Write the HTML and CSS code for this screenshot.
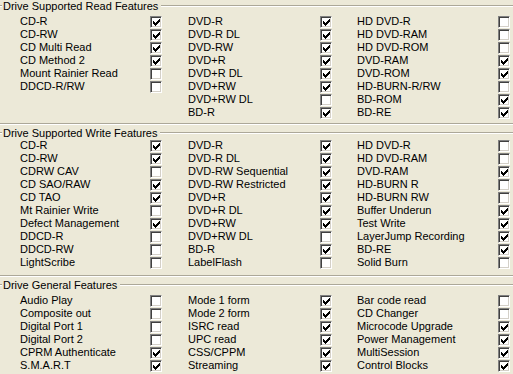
FILE: index.html
```html
<!DOCTYPE html>
<html lang="en">
<head>
  <meta charset="UTF-8" />
  <title>Drive Features</title>
  <link rel="stylesheet" href="styles.css">
</head>
<body>

  <!-- Read features -->
  <div class="group read">
    <div class="legend"><span>Drive Supported Read Features</span></div>
    <div class="cols">
      <div class="col c1">
        <div class="row"><span>CD-R</span><i class="cb on"></i></div>
        <div class="row"><span>CD-RW</span><i class="cb on"></i></div>
        <div class="row"><span>CD Multi Read</span><i class="cb on"></i></div>
        <div class="row"><span>CD Method 2</span><i class="cb on"></i></div>
        <div class="row"><span>Mount Rainier Read</span><i class="cb"></i></div>
        <div class="row"><span>DDCD-R/RW</span><i class="cb"></i></div>
      </div>
      <div class="col c2">
        <div class="row"><span>DVD-R</span><i class="cb on"></i></div>
        <div class="row"><span>DVD-R DL</span><i class="cb on"></i></div>
        <div class="row"><span>DVD-RW</span><i class="cb on"></i></div>
        <div class="row"><span>DVD+R</span><i class="cb on"></i></div>
        <div class="row"><span>DVD+R DL</span><i class="cb on"></i></div>
        <div class="row"><span>DVD+RW</span><i class="cb on"></i></div>
        <div class="row"><span>DVD+RW DL</span><i class="cb"></i></div>
        <div class="row"><span>BD-R</span><i class="cb on"></i></div>
      </div>
      <div class="col c3">
        <div class="row"><span>HD DVD-R</span><i class="cb"></i></div>
        <div class="row"><span>HD DVD-RAM</span><i class="cb"></i></div>
        <div class="row"><span>HD DVD-ROM</span><i class="cb"></i></div>
        <div class="row"><span>DVD-RAM</span><i class="cb on"></i></div>
        <div class="row"><span>DVD-ROM</span><i class="cb on"></i></div>
        <div class="row"><span>HD-BURN-R/RW</span><i class="cb"></i></div>
        <div class="row"><span>BD-ROM</span><i class="cb on"></i></div>
        <div class="row"><span>BD-RE</span><i class="cb on"></i></div>
      </div>
    </div>
    <div class="group-end"></div>
  </div>

  <!-- Write features -->
  <div class="group write">
    <div class="legend"><span>Drive Supported Write Features</span></div>
    <div class="cols">
      <div class="col c1">
        <div class="row"><span>CD-R</span><i class="cb on"></i></div>
        <div class="row"><span>CD-RW</span><i class="cb on"></i></div>
        <div class="row"><span>CDRW CAV</span><i class="cb"></i></div>
        <div class="row"><span>CD SAO/RAW</span><i class="cb on"></i></div>
        <div class="row"><span>CD TAO</span><i class="cb on"></i></div>
        <div class="row"><span>Mt Rainier Write</span><i class="cb"></i></div>
        <div class="row"><span>Defect Management</span><i class="cb on"></i></div>
        <div class="row"><span>DDCD-R</span><i class="cb"></i></div>
        <div class="row"><span>DDCD-RW</span><i class="cb"></i></div>
        <div class="row"><span>LightScribe</span><i class="cb"></i></div>
      </div>
      <div class="col c2">
        <div class="row"><span>DVD-R</span><i class="cb on"></i></div>
        <div class="row"><span>DVD-R DL</span><i class="cb on"></i></div>
        <div class="row"><span>DVD-RW Sequential</span><i class="cb on"></i></div>
        <div class="row"><span>DVD-RW Restricted</span><i class="cb on"></i></div>
        <div class="row"><span>DVD+R</span><i class="cb on"></i></div>
        <div class="row"><span>DVD+R DL</span><i class="cb on"></i></div>
        <div class="row"><span>DVD+RW</span><i class="cb on"></i></div>
        <div class="row"><span>DVD+RW DL</span><i class="cb"></i></div>
        <div class="row"><span>BD-R</span><i class="cb on"></i></div>
        <div class="row"><span>LabelFlash</span><i class="cb"></i></div>
      </div>
      <div class="col c3">
        <div class="row"><span>HD DVD-R</span><i class="cb"></i></div>
        <div class="row"><span>HD DVD-RAM</span><i class="cb"></i></div>
        <div class="row"><span>DVD-RAM</span><i class="cb on"></i></div>
        <div class="row"><span>HD-BURN R</span><i class="cb"></i></div>
        <div class="row"><span>HD-BURN RW</span><i class="cb"></i></div>
        <div class="row"><span>Buffer Underun</span><i class="cb on"></i></div>
        <div class="row"><span>Test Write</span><i class="cb on"></i></div>
        <div class="row"><span>LayerJump Recording</span><i class="cb on"></i></div>
        <div class="row"><span>BD-RE</span><i class="cb on"></i></div>
        <div class="row"><span>Solid Burn</span><i class="cb"></i></div>
      </div>
    </div>
    <div class="group-end"></div>
  </div>

  <!-- General features -->
  <div class="group general">
    <div class="legend"><span>Drive General Features</span></div>
    <div class="cols">
      <div class="col c1">
        <div class="row"><span>Audio Play</span><i class="cb"></i></div>
        <div class="row"><span>Composite out</span><i class="cb"></i></div>
        <div class="row"><span>Digital Port 1</span><i class="cb"></i></div>
        <div class="row"><span>Digital Port 2</span><i class="cb"></i></div>
        <div class="row"><span>CPRM Authenticate</span><i class="cb on"></i></div>
        <div class="row"><span>S.M.A.R.T</span><i class="cb on"></i></div>
      </div>
      <div class="col c2">
        <div class="row"><span>Mode 1 form</span><i class="cb on"></i></div>
        <div class="row"><span>Mode 2 form</span><i class="cb on"></i></div>
        <div class="row"><span>ISRC read</span><i class="cb on"></i></div>
        <div class="row"><span>UPC read</span><i class="cb on"></i></div>
        <div class="row"><span>CSS/CPPM</span><i class="cb on"></i></div>
        <div class="row"><span>Streaming</span><i class="cb on"></i></div>
      </div>
      <div class="col c3">
        <div class="row"><span>Bar code read</span><i class="cb"></i></div>
        <div class="row"><span>CD Changer</span><i class="cb"></i></div>
        <div class="row"><span>Microcode Upgrade</span><i class="cb on"></i></div>
        <div class="row"><span>Power Management</span><i class="cb on"></i></div>
        <div class="row"><span>MultiSession</span><i class="cb on"></i></div>
        <div class="row"><span>Control Blocks</span><i class="cb on"></i></div>
      </div>
    </div>
  </div>

</body>
</html>
```

FILE: styles.css
```css
body {
  background-color: #ECE9D8;
  font-family: "Liberation Sans", Arial, sans-serif;
  font-size: 11px;
  color: black;
  margin: 0;
  padding: 0;
  overflow: hidden;
}

.legend {
  display: flex;
  align-items: center;
  height: 12px;
  line-height: 12px;
}

.legend::before,
.legend::after {
  content: "";
  border-top: 1px solid #ACA899;
  border-bottom: 1px solid #FFFFFF;
}

.legend::before {
  width: 2px;
}

.legend::after {
  flex: 1;
}

.legend span {
  padding: 0 3px 0 1px;
  white-space: nowrap;
}

.group-end {
  border-top: 1px solid #ACA899;
  border-bottom: 1px solid #FFFFFF;
}

.cols {
  display: flex;
  padding-left: 20px;
}

.col.c1 {
  width: 142px;
}

.col.c2 {
  width: 144px;
  margin-left: 26px;
}

.col.c3 {
  width: 153px;
  margin-left: 25px;
}

.row {
  display: flex;
  align-items: center;
  justify-content: space-between;
  height: 13px;
  line-height: 13px;
  white-space: nowrap;
}

/* sunken classic checkbox */
.cb {
  position: relative;
  box-sizing: border-box;
  width: 12px;
  height: 12px;
  background: #FFFFFF;
  border: 1px solid;
  border-color: #808080 #FFFFFF #FFFFFF #808080;
  box-shadow: inset 1px 1px #404040, inset -1px -1px #D4D0C8;
}

.cb.on::after {
  content: "";
  position: absolute;
  left: 2px;
  top: 4px;
  width: 1px;
  height: 3px;
  background: #000;
  box-shadow: 1px 1px #000, 2px 2px #000, 3px 1px #000,
              4px 0 #000, 5px -1px #000, 6px -2px #000;
}

/* section spacing */
.read .cols {
  margin-top: 3px;
}

.read .group-end {
  margin-top: 4px;
}

.write {
  margin-top: 2px;
}

.write .group-end {
  margin-top: 6px;
}

.general {
  margin-top: 2px;
}

.general .cols {
  margin-top: 3px;
}
```
